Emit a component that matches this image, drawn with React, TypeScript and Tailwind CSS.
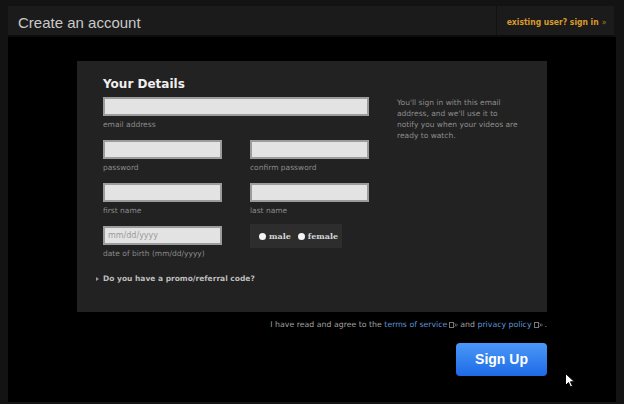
import { ReactNode } from 'react';

const SANS = "font-['DejaVu_Sans',sans-serif]";

function Field({ label, wide, placeholder }: { label: string; wide?: boolean; placeholder?: string }) {
  return (
    <div className="flex flex-col">
      <div
        className={`h-[19px] border-2 border-[#9c9c9c] bg-[#e3e3e3] px-[3px] flex items-center text-[8px] text-[#9a9a9a] ${SANS} ${
          wide ? 'w-[266px]' : 'w-[119px]'
        }`}
      >
        {placeholder}
      </div>
      <span className={`mt-[4px] text-[7.5px] leading-[10px] text-[#8a8a8a] ${SANS}`}>{label}</span>
    </div>
  );
}

function Row({ children }: { children: ReactNode }) {
  return <div className="flex gap-[28px]">{children}</div>;
}

function ExtIcon() {
  return (
    <svg width="9" height="6" viewBox="0 0 9 6" className="inline-block mx-[2px] align-middle" fill="none">
      <rect x="0.5" y="0.5" width="4" height="5" stroke="#777" strokeWidth="1" />
      <path d="M5.5 1.5l1.5 1.5-1.5 1.5M7 1.5l1.5 1.5L7 4.5" stroke="#777" strokeWidth="0.8" />
    </svg>
  );
}

export default function App() {
  return (
    <div className="w-[624px] h-[404px] bg-[#131313] px-[8px] pt-[6px] pb-[2px] flex flex-col overflow-hidden relative">
      {/* header */}
      <div className="h-[31px] shrink-0 flex bg-[#1b1b1b] border-b-[2px] border-[#0c0c0c] mr-[2px]">
        <div className="flex-1 flex items-center pl-[10px] pt-[5px] text-[15px] text-[#c9c9c9] font-['Liberation_Sans',sans-serif]">
          Create an account
        </div>
        <div className="w-[118px] border-l border-[#111] flex items-center justify-center pl-[2px] pt-[4px] text-[8.5px] font-bold text-[#d89a2a] font-['DejaVu_Sans_Condensed','DejaVu_Sans',sans-serif]">
          existing user? sign in <span className="ml-[3px] font-normal text-[#a87a30]">»</span>
        </div>
      </div>

      {/* body */}
      <div className="flex-1 bg-black flex flex-col items-center pt-[24px]">
        <div className="w-[470px] h-[251px] shrink-0 bg-[#222222] pl-[26px] pt-[15px] flex">
          <div className="w-[266px] flex flex-col">
            <h2 className={`text-[12px] font-bold text-[#f0f0f0] leading-[16px] ${SANS}`}>Your Details</h2>
            <div className="mt-[5px] flex flex-col gap-[10px]">
              <Field label="email address" wide />
              <Row>
                <Field label="password" />
                <Field label="confirm password" />
              </Row>
              <Row>
                <Field label="first name" />
                <Field label="last name" />
              </Row>
              <Row>
                <Field label="date of birth (mm/dd/yyyy)" placeholder="mm/dd/yyyy" />
                <div className="-mt-[2px] w-[92px] h-[24px] bg-[#2d2d2d] flex items-center pl-[9px] gap-[3px] text-[8px] font-bold text-[#d6d6d6] font-['DejaVu_Serif',serif]">
                  <span className="w-[7px] h-[7px] rounded-full bg-[#f4f4f4]" />
                  <span className="mr-[4px]">male</span>
                  <span className="w-[7px] h-[7px] rounded-full bg-[#f4f4f4]" />
                  <span>female</span>
                </div>
              </Row>
            </div>
            <div className={`mt-[14px] -ml-[7px] flex items-center gap-[4px] text-[7.5px] font-bold text-[#bdbdbd] ${SANS}`}>
              <span className="w-0 h-0 border-y-[2.5px] border-y-transparent border-l-[3px] border-l-[#999]" />
              Do you have a promo/referral code?
            </div>
          </div>
          <p className={`ml-[28px] mt-[21px] w-[123px] text-[7.5px] leading-[11px] text-[#8d8d8d] ${SANS}`}>
            You'll sign in with this email address, and we'll use it to notify you when your videos are ready to watch.
          </p>
        </div>

        <div className="w-[470px] flex flex-col items-end">
          <p className={`mt-[8px] text-[7.8px] leading-[10px] text-[#a0a0a0] ${SANS}`}>
            I have read and agree to the <span className="text-[#5b95d6]">terms of service</span>
            <ExtIcon />
            and <span className="text-[#5b95d6]">privacy policy</span>
            <ExtIcon />.
          </p>
          <button className="mt-[13px] w-[91px] h-[33px] rounded-[4px] bg-gradient-to-b from-[#4a98f7] to-[#1d6ae6] text-white text-[14px] font-bold font-['Liberation_Sans',sans-serif]">
            Sign Up
          </button>
        </div>
      </div>

      {/* mouse cursor */}
      <svg className="absolute left-[565px] top-[373px]" width="10" height="15" viewBox="0 0 10 15">
        <path d="M0.5 0.5v12l3-3 2 4.5 2-1-2-4.2h4z" fill="#fff" stroke="#000" strokeWidth="1" />
      </svg>
    </div>
  );
}
